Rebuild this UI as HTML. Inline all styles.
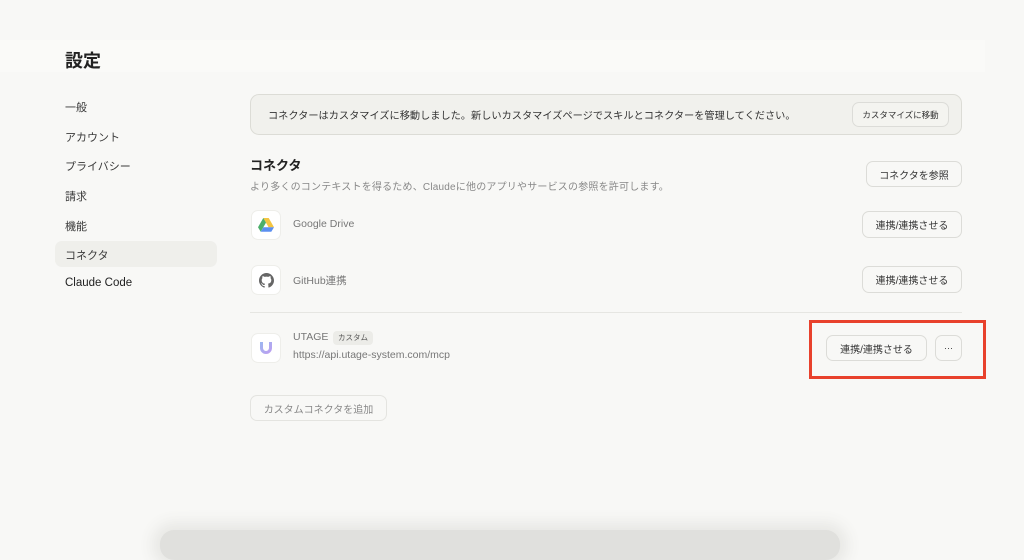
<!DOCTYPE html>
<html><head><meta charset="utf-8"><style>
*{margin:0;padding:0;box-sizing:border-box}
html,body{width:1024px;height:538px}
body{background:#f8f8f6;font-family:"Liberation Sans","Noto Sans CJK JP",sans-serif;position:relative;overflow:hidden;color:#2b2b2b}
.a{position:absolute;white-space:nowrap}
.nav{left:65px;font-size:11px;color:#3a3a3a}
.btn{position:absolute;border:1px solid #dcdcd8;border-radius:7px;background:#f8f8f6;font-size:10px;color:#333;display:flex;align-items:center;justify-content:center}
.ic{position:absolute;left:251px;width:30px;height:30px;border-radius:7px;background:#fff;border:1px solid #eeeeea;display:flex;align-items:center;justify-content:center}
.nm{left:293px;font-size:10.5px;color:#777}
</style></head><body>
<div class="a" style="left:0;top:40px;width:985px;height:32px;background:#fafaf8"></div>
<div class="a" style="left:65px;top:47px;font-size:18px;font-weight:bold;color:#222">設定</div>
<div class="a nav" style="top:99px">一般</div>
<div class="a nav" style="top:129px">アカウント</div>
<div class="a nav" style="top:158px">プライバシー</div>
<div class="a nav" style="top:188px">請求</div>
<div class="a nav" style="top:218px">機能</div>
<div class="a" style="left:55px;top:241px;width:162px;height:26px;background:#efefeb;border-radius:7px"></div>
<div class="a nav" style="top:247px">コネクタ</div>
<div class="a nav" style="top:277px;color:#222;font-size:11.5px">Claude Code</div>

<div class="a" style="left:250px;top:94px;width:712px;height:41px;background:#f1f1ed;border:1px solid #dcdcd6;border-radius:9px"></div>
<div class="a" style="left:268px;top:107px;font-size:10.2px;color:#333">コネクターはカスタマイズに移動しました。新しいカスタマイズページでスキルとコネクターを管理してください。</div>
<div class="btn" style="left:852px;top:102px;width:97px;height:25px;font-size:8.5px;background:#f4f4f0">カスタマイズに移動</div>

<div class="a" style="left:250px;top:155px;font-size:13px;font-weight:bold;color:#222">コネクタ</div>
<div class="a" style="left:250px;top:178px;font-size:10px;color:#888;letter-spacing:0.2px">より多くのコンテキストを得るため、Claudeに他のアプリやサービスの参照を許可します。</div>
<div class="btn" style="left:866px;top:161px;width:96px;height:26px">コネクタを参照</div>

<div class="ic" style="top:210px"><svg width="16" height="14" viewBox="0 0 16 14"><path d="M5.3 0h5.4l5.3 9.2H10.6z" fill="#f4c542"/><path d="M5.3 0L0 9.2l2.7 4.6L8 4.6z" fill="#4caf6a"/><path d="M2.7 13.8h10.6L16 9.2H5.4z" fill="#5b8ff0"/></svg></div>
<div class="a nm" style="top:218px">Google Drive</div>
<div class="btn" style="left:862px;top:211px;width:100px;height:27px">連携/連携させる</div>

<div class="ic" style="top:265px"><svg width="15" height="15" viewBox="0 0 16 16"><path fill="#666" d="M8 0C3.6 0 0 3.6 0 8c0 3.5 2.3 6.5 5.5 7.6.4.1.5-.2.5-.4v-1.4c-2.2.5-2.7-1-2.7-1-.4-.9-.9-1.200-.9-1.2-.7-.5.1-.5.1-.5.8.1 1.2.8 1.2.8.7 1.3 1.9.9 2.3.7.1-.5.3-.9.5-1.1-1.8-.2-3.6-.9-3.6-4 0-.9.3-1.6.8-2.100-.1-.2-.4-1 .1-2.1 0 0 .7-.2 2.2.8.6-.2 1.3-.3 2-.3s1.4.1 2 .3c1.5-1 2.2-.8 2.2-.8.4 1.1.2 1.9.1 2.1.5.6.8 1.3.8 2.1 0 3.1-1.9 3.7-3.6 3.9.3.3.5.8.5 1.5v2.2c0 .2.1.5.6.4C13.7 14.5 16 11.5 16 8c0-4.4-3.6-8-8-8z"/></svg></div>
<div class="a nm" style="top:273px">GitHub連携</div>
<div class="btn" style="left:862px;top:266px;width:100px;height:27px">連携/連携させる</div>

<div class="a" style="left:250px;top:312px;width:712px;height:1px;background:#e6e6e2"></div>

<div class="ic" style="top:333px"><svg width="14" height="14" viewBox="0 0 14 14"><defs><linearGradient id="g" x1="0" y1="0" x2="1" y2="1"><stop offset="0" stop-color="#9cb8f0"/><stop offset="1" stop-color="#c09cf0"/></linearGradient></defs><path d="M1 1h3v6a3 3 0 006 0V1h3v6A6 6 0 011 7z" fill="url(#g)"/></svg></div>
<div class="a nm" style="top:331px">UTAGE</div>
<div class="a" style="left:333px;top:331px;height:14px;padding:0 5px;background:#ececE8;border-radius:4px;font-size:7.5px;line-height:14px;color:#555">カスタム</div>
<div class="a nm" style="top:349px;font-size:10.5px">https://api.utage-system.com/mcp</div>
<div class="btn" style="left:826px;top:335px;width:101px;height:26px">連携/連携させる</div>
<div class="btn" style="left:935px;top:335px;width:27px;height:26px;font-size:9px">···</div>
<div class="a" style="left:809px;top:320px;width:177px;height:59px;border:3px solid #e8412c"></div>

<div class="btn" style="left:250px;top:395px;width:137px;height:26px;color:#888;border-color:#e4e4e0">カスタムコネクタを追加</div>

<div class="a" style="left:160px;top:530px;width:680px;height:30px;border-radius:14px;background:#e0e0dd;box-shadow:0 0 14px 8px #e8e8e5"></div>
</body></html>
